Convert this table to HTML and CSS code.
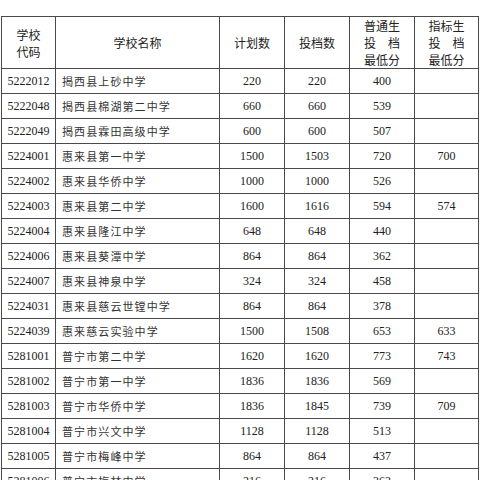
FILE: index.html
```html
<!DOCTYPE html>
<html lang="zh">
<head>
<meta charset="utf-8">
<link rel="stylesheet" href="styles.css">
</head>
<body>
<table class="grid">
  <colgroup>
    <col class="c-code"><col class="c-name"><col class="c-num"><col class="c-num"><col class="c-num"><col class="c-last">
  </colgroup>
  <thead>
    <tr class="head">
      <th>学校<br>代码</th>
      <th>学校名称</th>
      <th>计划数</th>
      <th>投档数</th>
      <th><span class="stack"><span>普通生</span><span class="just"><span>投</span><span>档</span></span><span>最低分</span></span></th>
      <th><span class="stack"><span>指标生</span><span class="just"><span>投</span><span>档</span></span><span>最低分</span></span></th>
    </tr>
  </thead>
  <tbody>
    <tr><td>5222012</td><td class="name">揭西县上砂中学</td><td>220</td><td>220</td><td>400</td><td></td></tr>
    <tr><td>5222048</td><td class="name">揭西县棉湖第二中学</td><td>660</td><td>660</td><td>539</td><td></td></tr>
    <tr><td>5222049</td><td class="name">揭西县霖田高级中学</td><td>600</td><td>600</td><td>507</td><td></td></tr>
    <tr><td>5224001</td><td class="name">惠来县第一中学</td><td>1500</td><td>1503</td><td>720</td><td>700</td></tr>
    <tr><td>5224002</td><td class="name">惠来县华侨中学</td><td>1000</td><td>1000</td><td>526</td><td></td></tr>
    <tr><td>5224003</td><td class="name">惠来县第二中学</td><td>1600</td><td>1616</td><td>594</td><td>574</td></tr>
    <tr><td>5224004</td><td class="name">惠来县隆江中学</td><td>648</td><td>648</td><td>440</td><td></td></tr>
    <tr><td>5224006</td><td class="name">惠来县葵潭中学</td><td>864</td><td>864</td><td>362</td><td></td></tr>
    <tr><td>5224007</td><td class="name">惠来县神泉中学</td><td>324</td><td>324</td><td>458</td><td></td></tr>
    <tr><td>5224031</td><td class="name">惠来县慈云世镗中学</td><td>864</td><td>864</td><td>378</td><td></td></tr>
    <tr><td>5224039</td><td class="name">惠来慈云实验中学</td><td>1500</td><td>1508</td><td>653</td><td>633</td></tr>
    <tr><td>5281001</td><td class="name">普宁市第二中学</td><td>1620</td><td>1620</td><td>773</td><td>743</td></tr>
    <tr><td>5281002</td><td class="name">普宁市第一中学</td><td>1836</td><td>1836</td><td>569</td><td></td></tr>
    <tr><td>5281003</td><td class="name">普宁市华侨中学</td><td>1836</td><td>1845</td><td>739</td><td>709</td></tr>
    <tr><td>5281004</td><td class="name">普宁市兴文中学</td><td>1128</td><td>1128</td><td>513</td><td></td></tr>
    <tr><td>5281005</td><td class="name">普宁市梅峰中学</td><td>864</td><td>864</td><td>437</td><td></td></tr>
    <tr><td>5281006</td><td class="name">普宁市梅林中学</td><td>216</td><td>216</td><td>363</td><td></td></tr>
  </tbody>
</table>
</body>
</html>
```

FILE: styles.css
```css
html, body {
  margin: 0;
  padding: 0;
  background: #fff;
}
body {
  padding: 16px 0 0 1px;
  color: #222;
  font-family: "Liberation Serif", "Noto Sans CJK SC", serif;
}
.grid {
  border-collapse: collapse;
  table-layout: fixed;
  width: 478px;
}
.c-code { width: 54px; }
.c-name { width: 164px; }
.c-num { width: 65px; }
.c-last { width: 64px; }
.grid th, .grid td {
  border: 1px solid #4a4a4a;
  padding: 0;
  text-align: center;
  vertical-align: middle;
  overflow: hidden;
  white-space: nowrap;
}
.head th {
  height: 48px;
  font-family: "Noto Sans CJK SC", sans-serif;
  font-weight: normal;
  font-size: 12px;
  line-height: 17px;
  color: #222;
}
.stack {
  display: inline-flex;
  flex-direction: column;
  width: 36px;
}
.just {
  display: flex;
  justify-content: space-between;
}
.grid td {
  height: 24px;
  font-size: 12px;
  line-height: 16px;
}
.grid td.name {
  text-align: left;
  padding-left: 6px;
  font-family: "Noto Sans CJK SC", sans-serif;
  font-size: 11px;
  letter-spacing: 1.1px;
  color: #333;
}
```
